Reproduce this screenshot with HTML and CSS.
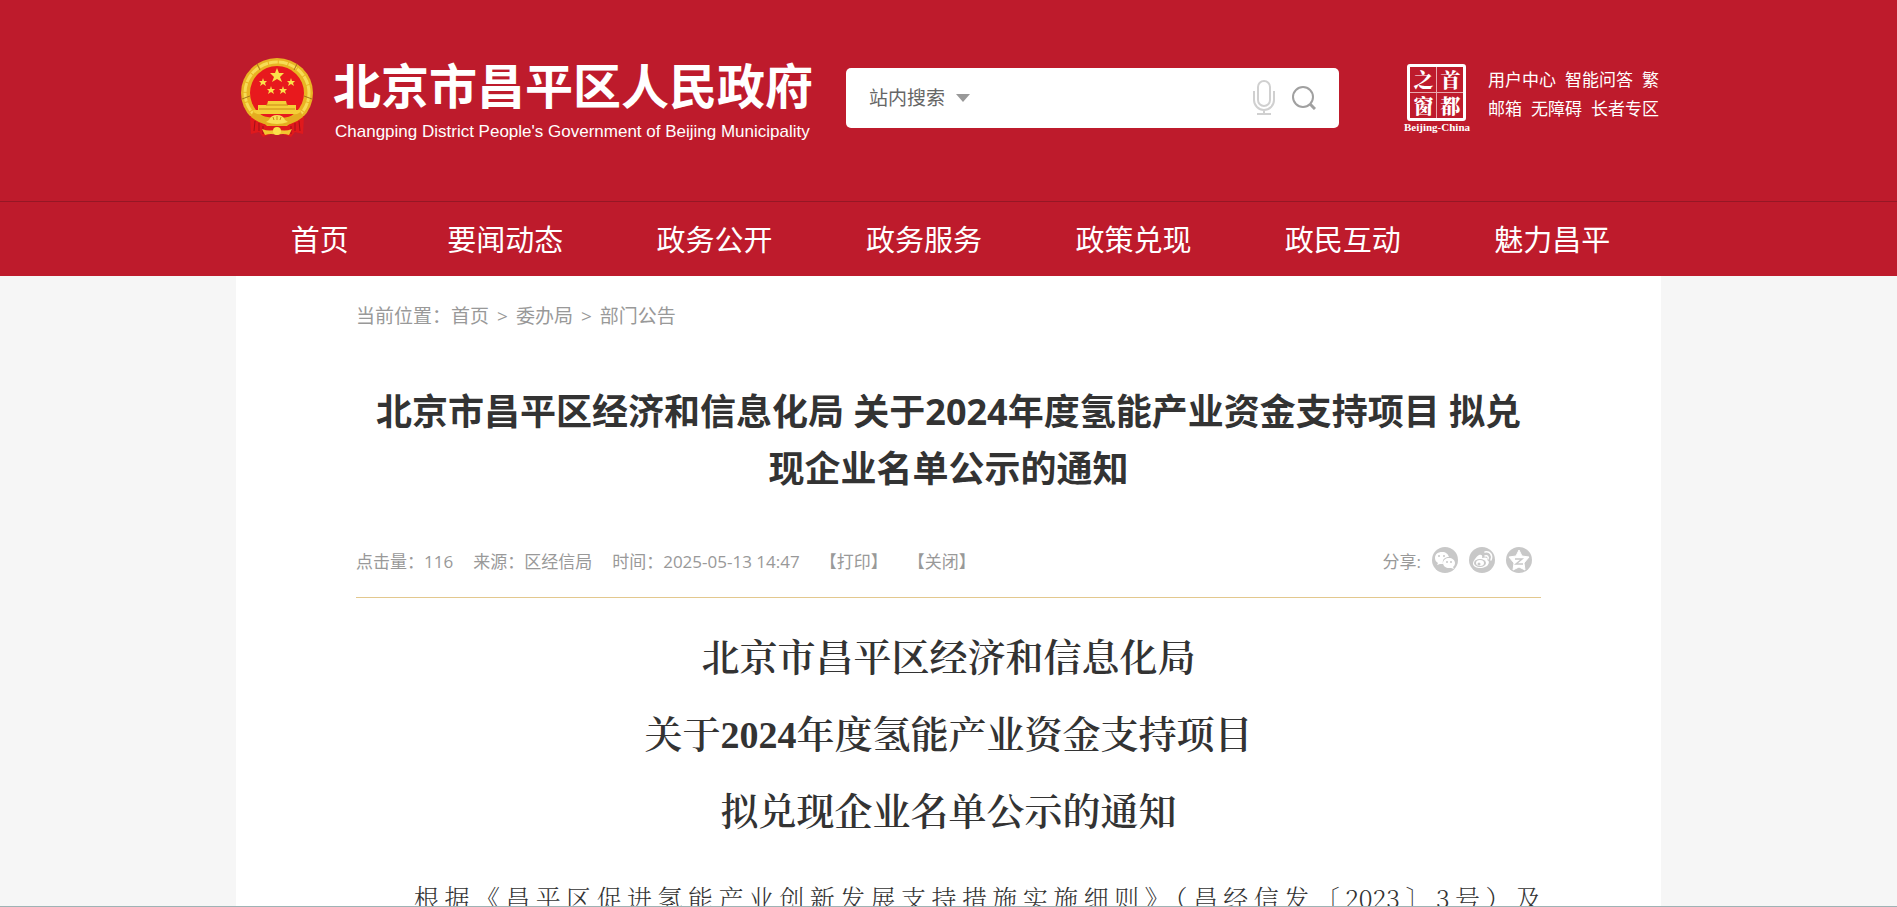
FILE: index.html
```html
<!DOCTYPE html>
<html lang="zh-CN">
<head>
  <meta charset="UTF-8" />
  <meta name="viewport" content="width=device-width, initial-scale=1.0"/>
  <title>北京市昌平区人民政府</title>
  <link rel="stylesheet" href="styles.css">
</head>
<body>

<header class="header">
  <div class="wrap header-top">
    <a class="logo" href="#">
      <svg class="emblem" viewBox="0 0 72 80" aria-hidden="true">
        <ellipse cx="36" cy="35" rx="36" ry="35" fill="#e9b423"/>
        <ellipse cx="36" cy="35" rx="32" ry="31" fill="none" stroke="#f7dc55" stroke-width="3" stroke-dasharray="9 1"/>
        <path d="M1 41 l8 -3 M71 41 l-8 -3 M16 6 l3 6 M56 6 l-3 6" stroke="#a8741a" stroke-width="1"/>
        <circle cx="36" cy="35" r="27" fill="#e8191d"/>
        <path d="M36 10 l2 5 h5 l-4 4 l2 5 l-5 -3 l-5 3 l2 -5 l-4 -4 h5z" fill="#fbe04a"/>
        <path id="star" d="M22 20 l1 3 h3 l-2 2 l1 3 l-3 -2 l-3 2 l1 -3 l-2 -2 h3z" fill="#fbe04a"/>
        <use href="#star" x="28"/>
        <use href="#star" x="8" y="8"/>
        <use href="#star" x="20" y="8"/>
        <path d="M27 43 h18 l1 4 h9 v5 h5 l-2 4 H14 l-2 -4 h5 v-5 h9z" fill="#f5cf38"/>
        <path d="M25 47 h22 M18 51 h36" stroke="#c98a16" stroke-width="1"/>
        <path d="M9 58 q11 4 17 10 h20 q6 -6 17 -10 l-1 18 l-8 -2 l-4 5 l-8 -3 h-12 l-8 3 l-4 -5 l-8 2z" fill="#e0191c"/>
        <path d="M14 63 l-1 10 M18 65 v8 M22 68 v8 M58 63 l1 10 M54 65 v8 M50 68 v8" stroke="#a30f18" stroke-width="1" fill="none"/>
        <path d="M12 54 q10 6 24 6 q14 0 24 -6 l2 5 q-11 9 -26 9 q-15 0 -26 -9z" fill="#e5ad20"/>
        <path d="M28 62 q2 -5 8 -5 q6 0 8 5 l3 2 q-11 4 -22 0z" fill="#f9df55"/>
        <path d="M21 71 q8 3 15 0 q7 3 15 0 l-3 6 q-6 -2 -12 0 q-6 -2 -12 0z" fill="#f2c530"/>
        <circle cx="36" cy="73" r="4" fill="#fbe04a"/>
        <path d="M33 62 l-1 -3 M36 62 v-4 M39 62 l1 -3" stroke="#c98a16" stroke-width="1"/>
      </svg>
      <span class="logo-text">
        <span class="logo-cn">北京市昌平区人民政府</span>
        <span class="logo-en">Changping District People's Government of Beijing Municipality</span>
      </span>
    </a>

    <form class="search">
      <label class="search-type">
        <select aria-label="搜索范围">
          <option>站内搜索</option>
        </select>
        <svg width="14" height="8" viewBox="0 0 14 8" aria-hidden="true"><path d="M0 0h14L7 8z" fill="#999"/></svg>
      </label>
      <input type="text" aria-label="搜索">
      <button type="button" aria-label="语音搜索">
        <svg width="24" height="36" viewBox="0 0 24 36" fill="none" stroke="#d0d0d0" stroke-width="2">
          <rect x="6" y="1" width="12" height="25" rx="6"/>
          <path d="M2 11v9a10 10 0 0 0 20 0v-9M12 30v4M5 34h14"/>
        </svg>
      </button>
      <button type="submit" aria-label="提交搜索">
        <svg width="24" height="24" viewBox="0 0 24 24" fill="none" stroke="#a0a0a0" stroke-width="2">
          <circle cx="11" cy="11" r="10"/>
          <path d="M18 18l5 5" stroke-width="3"/>
        </svg>
      </button>
    </form>

    <div class="header-side">
      <a class="capital" href="#">
        <span class="capital-seal">
          <span>之</span><span>首</span><span>窗</span><span>都</span>
        </span>
        <span class="capital-en">Beijing-China</span>
      </a>
      <div class="side-links">
        <div><a href="#">用户中心</a><a href="#">智能问答</a><a href="#">繁</a></div>
        <div><a href="#">邮箱</a><a href="#">无障碍</a><a href="#">长者专区</a></div>
      </div>
    </div>
  </div>

  <nav class="nav">
    <div class="wrap nav-list">
      <a href="#">首页</a>
      <a href="#">要闻动态</a>
      <a href="#">政务公开</a>
      <a href="#">政务服务</a>
      <a href="#">政策兑现</a>
      <a href="#">政民互动</a>
      <a href="#">魅力昌平</a>
    </div>
  </nav>
</header>

<main class="wrap main">
  <div class="crumb">
    <span>当前位置：</span><a href="#">首页</a><i>&gt;</i><a href="#">委办局</a><i>&gt;</i><a href="#">部门公告</a>
  </div>

  <h1 class="title">北京市昌平区经济和信息化局 关于2024年度氢能产业资金支持项目 拟兑现企业名单公示的通知</h1>

  <div class="meta">
    <span>点击量：116</span>
    <span>来源：区经信局</span>
    <span>时间：2025-05-13 14:47</span>
    <a href="#">【打印】</a>
    <a href="#">【关闭】</a>
    <div class="share">
      <span>分享:</span>
      <a href="#" aria-label="微信">
        <svg viewBox="0 0 26 26">
          <circle cx="13" cy="13" r="13" fill="#c8c8c8"/>
          <path d="M10 5c-4 0-7 2-7 6 0 2 1 4 3 5l-1 2 3-1h3c-1-5 2-7 6-7-1-3-3-5-7-5z" fill="#fff"/>
          <path d="M17 11c-3 0-6 2-6 5s3 5 6 5h2l3 1-1-2c1-1 2-2 2-4 0-3-3-5-6-5z" fill="#fff"/>
          <g fill="#c8c8c8"><circle cx="7" cy="9" r="1"/><circle cx="12" cy="9" r="1"/><circle cx="15" cy="15" r="1"/><circle cx="19" cy="15" r="1"/></g>
        </svg>
      </a>
      <a href="#" aria-label="微博">
        <svg viewBox="0 0 26 26">
          <circle cx="13" cy="13" r="13" fill="#c8c8c8"/>
          <path d="M10 8c2-1 4 0 3 3 3-1 6-1 5 2 3 1 2 4 0 6-4 3-13 3-14-2 0-3 3-7 6-9z" fill="#fff"/>
          <ellipse cx="11" cy="16" rx="6" ry="4" fill="#c8c8c8"/>
          <ellipse cx="11" cy="16" rx="4" ry="3" fill="#fff"/>
          <circle cx="10" cy="17" r="1.5" fill="#c8c8c8"/>
          <path d="M16 5c5-1 8 3 6 8M16 9c2-1 4 1 3 3" fill="none" stroke="#fff" stroke-width="1.5" stroke-linecap="round"/>
        </svg>
      </a>
      <a href="#" aria-label="QQ空间">
        <svg viewBox="0 0 26 26">
          <circle cx="13" cy="13" r="13" fill="#c8c8c8"/>
          <path d="M13 3l3 6 7 1-5 6 1 7-6-3-6 3 1-7-5-6 7-1z" fill="#fff" stroke="#fff" stroke-linejoin="round"/>
          <path d="M9 12h7l-6 5h7" fill="none" stroke="#c8c8c8" stroke-width="1.5"/>
        </svg>
      </a>
    </div>
  </div>

  <article class="article">
    <h2>北京市昌平区经济和信息化局<br>关于2024年度氢能产业资金支持项目<br>拟兑现企业名单公示的通知</h2>
    <p>根据《昌平区促进氢能产业创新发展支持措施实施细则》（昌经信发〔2023〕3号）及</p>
  </article>
</main>

<div class="bottom-line"></div>

</body>
</html>
```
FILE: styles.css
```css
* {
  box-sizing: border-box;
}
html {
  scrollbar-width: none;
}
body {
  margin: 0;
  background: #f6f6f6;
  color: #333;
  font-family: "Open Sans", "Noto Sans CJK SC", sans-serif;
}
a {
  color: inherit;
  text-decoration: none;
}
svg {
  display: block;
}
.wrap {
  max-width: 1425px;
  margin: 0 auto;
}

/* header */
.header {
  background: #be1b2c;
  color: #fff;
}
.header-top {
  display: flex;
  align-items: center;
  padding: 52px 2px 57px 5px;
}
.logo {
  display: flex;
  align-items: center;
  gap: 20px;
}
.emblem {
  flex-shrink: 0;
  width: 72px;
  height: 80px;
}
.logo-text {
  display: flex;
  flex-direction: column;
  white-space: nowrap;
}
.logo-cn {
  font-size: 48px;
  font-weight: 700;
  line-height: 68px;
}
.logo-en {
  padding-left: 2px;
  font-family: "Liberation Sans", Arial, sans-serif;
  font-size: 17px;
  line-height: 24px;
}
.search {
  display: flex;
  align-items: center;
  gap: 16px;
  width: 493px;
  height: 60px;
  margin-left: 33px;
  padding: 0 23px;
  background: #fff;
  border-radius: 5px;
}
.search-type {
  display: flex;
  align-items: center;
  gap: 10px;
}
.search select {
  appearance: none;
  padding: 0;
  border: none;
  background: none;
  color: #666;
  font-family: inherit;
  font-size: 19px;
}
.search input {
  flex: 1;
  min-width: 0;
  height: 40px;
  border: none;
  outline: none;
  font-size: 19px;
}
.search button {
  padding: 0;
  border: none;
  background: none;
  cursor: pointer;
}
.header-side {
  display: flex;
  align-items: center;
  gap: 18px;
  margin-left: auto;
}
.capital {
  display: flex;
  flex-direction: column;
  align-items: center;
}
.capital-seal {
  display: grid;
  grid-template-columns: 1fr 1fr;
  gap: 1px;
  width: 59px;
  height: 57px;
  border: 3px solid #fff;
  border-radius: 3px;
  background: #e9a9af;
}
.capital-seal span {
  background: #be1b2c;
  font-family: "Noto Serif CJK SC", "Noto Sans CJK SC", serif;
  font-size: 20px;
  font-weight: 900;
  line-height: 25px;
  text-align: center;
}
.capital-en {
  font-family: "Liberation Serif", serif;
  font-size: 11px;
  font-weight: 700;
  line-height: 12px;
}
.side-links {
  padding-bottom: 8px;
  font-size: 17px;
  line-height: 29px;
  white-space: nowrap;
}
.side-links div {
  display: flex;
  justify-content: space-between;
  gap: 9px;
}

/* nav */
.nav {
  border-top: 1px solid #961725;
}
.nav-list {
  display: flex;
  justify-content: space-around;
  padding: 2px 4px 0 8px;
  font-size: 29px;
  line-height: 72px;
}
.nav-list a:first-child {
  padding-right: 5px;
}

/* content */
.main {
  padding: 20px 120px 0;
  background: #fff;
}
.crumb {
  display: flex;
  color: #999;
  font-size: 19px;
  line-height: 40px;
}
.crumb i {
  padding: 0 8px;
  font-style: normal;
}
.title {
  margin: 47px 0 43px;
  padding: 0 6px;
  font-size: 36px;
  font-weight: 700;
  line-height: 57px;
  text-align: center;
}
.meta {
  display: flex;
  align-items: center;
  gap: 20px;
  height: 58px;
  padding-bottom: 17px;
  border-bottom: 1px solid #e3c88e;
  color: #999;
  font-size: 17px;
}
.share {
  display: flex;
  align-items: center;
  gap: 11px;
  margin-left: auto;
  padding-right: 9px;
}
.share svg {
  width: 26px;
  height: 26px;
}
.article {
  padding-top: 22px;
}
.article h2 {
  margin: 0 0 16px;
  font-family: "Liberation Serif", "Noto Serif CJK SC", "Noto Sans CJK SC", serif;
  font-size: 38px;
  font-weight: 600;
  line-height: 77px;
  text-align: center;
}
.article p {
  margin: 0;
  font-family: "Noto Serif CJK SC", "Noto Sans CJK SC", serif;
  font-size: 25px;
  font-weight: 300;
  line-height: 60px;
  text-indent: 58px;
  text-align: justify;
  text-align-last: justify;
}
.bottom-line {
  position: fixed;
  left: 0;
  right: 0;
  bottom: 0;
  height: 1px;
  background: #9fb3b5;
}
```
